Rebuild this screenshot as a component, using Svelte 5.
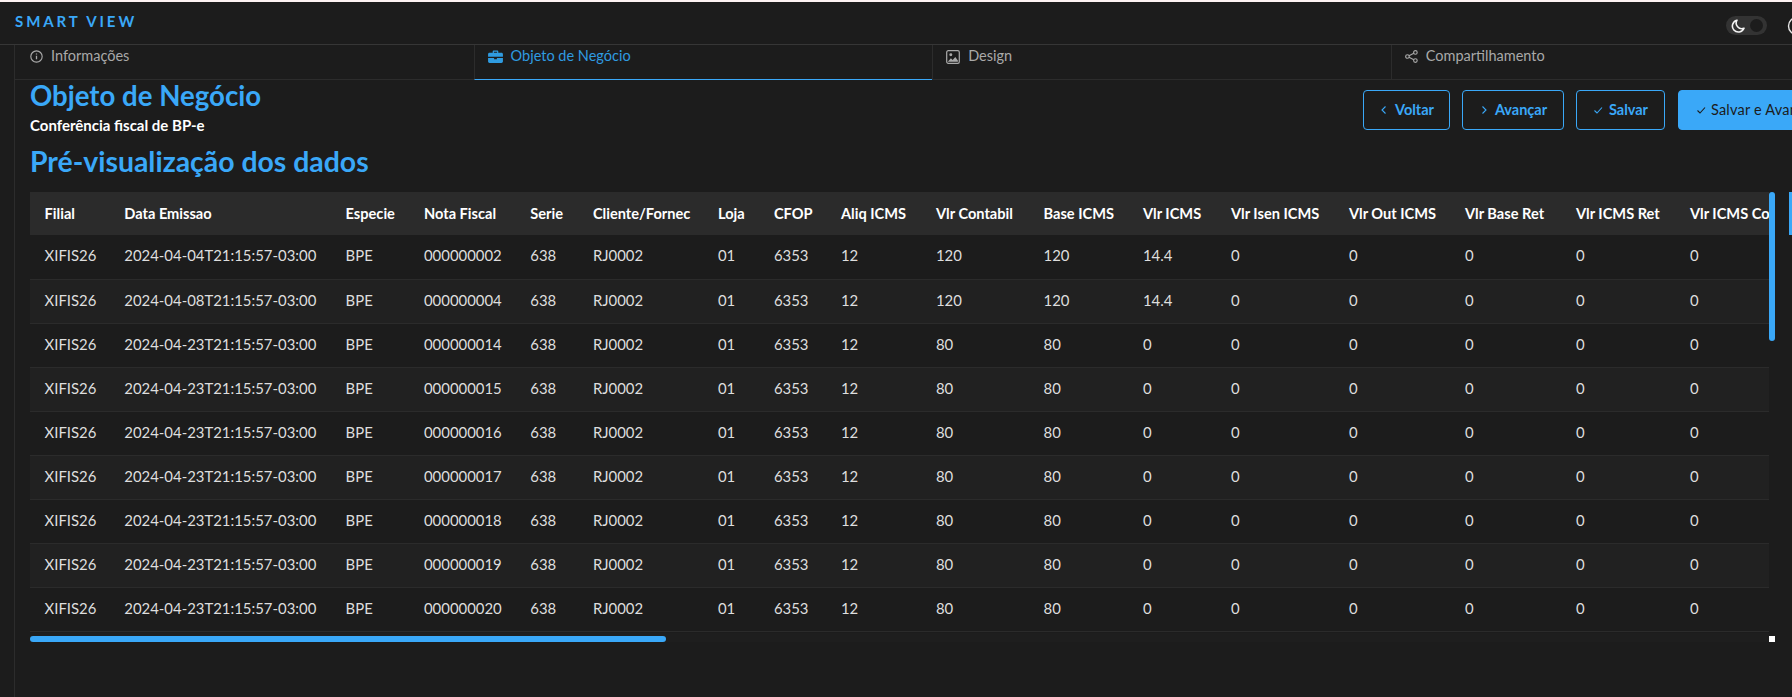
<script>
  const columns = [
    ['Filial', 79.7], ['Data Emissao', 221.3], ['Especie', 78.4], ['Nota Fiscal', 106.3], ['Serie', 62.7],
    ['Cliente/Fornec', 125], ['Loja', 56], ['CFOP', 67], ['Aliq ICMS', 95], ['Vlr Contabil', 107.6],
    ['Base ICMS', 99.4], ['Vlr ICMS', 88], ['Vlr Isen ICMS', 118], ['Vlr Out ICMS', 116], ['Vlr Base Ret', 111],
    ['Vlr ICMS Ret', 114], ['Vlr ICMS Comp', 140]
  ];
  const tableWidth = columns.reduce((s, c) => s + c[1], 0);
  const rowsInput = [
    ['04-04', '02', 120, 120, 14.4], ['04-08', '04', 120, 120, 14.4], ['04-23', '14', 80, 80, 0],
    ['04-23', '15', 80, 80, 0], ['04-23', '16', 80, 80, 0], ['04-23', '17', 80, 80, 0],
    ['04-23', '18', 80, 80, 0], ['04-23', '19', 80, 80, 0], ['04-23', '20', 80, 80, 0]
  ];
  const rows = rowsInput.map(([d, n, c, b, i]) => [
    'XIFIS26', `2024-${d}T21:15:57-03:00`, 'BPE', `0000000${n}`, '638', 'RJ0002', '01', '6353', '12',
    c, b, i, 0, 0, 0, 0, 0
  ]);
</script>

<div class="page">
  <header class="topbar">
    <div class="brand">SMART VIEW</div>
    <div class="tools">
      <div class="toggle">
        <svg class="moon" viewBox="0 0 14 14" width="14" height="14"><path d="M6 1.2a6 6 0 1 0 7 8 5.6 5.6 0 0 1-7-8z" fill="none" stroke="#f4f4f4" stroke-width="1.6" stroke-linejoin="round"/></svg>
        <span class="knob"></span>
      </div>
      <svg class="user" viewBox="0 0 20 20" width="20" height="20"><circle cx="10" cy="10" r="8.5" fill="none" stroke="#e6e6e6" stroke-width="1.4"/></svg>
    </div>
  </header>

  <main class="main">
    <nav class="tabs">
      <div class="tab">
        <svg viewBox="0 0 16 16" width="13" height="13"><circle cx="8" cy="8" r="7" fill="none" stroke="currentColor" stroke-width="1.4"/><path d="M8 7v4.4M8 4.2v1.3" stroke="currentColor" stroke-width="1.6" fill="none"/></svg>
        <span>Informações</span>
      </div>
      <div class="tab active">
        <svg viewBox="0 0 16 14" width="15" height="13"><path d="M5 3V1.6C5 .9 5.5.5 6.100.5h3.800C10.500.5 11 .9 11 1.600V3h3.400c.9 0 1.600.6 1.600 1.500V7.400H0V4.500C0 3.600.7 3 1.600 3zM6.300 3h3.400V1.800H6.300zM0 8.500h6.500V10h3V8.500H16v4c0 .9-.7 1.500-1.600 1.500H1.600C.7 14 0 13.400 0 12.500z" fill="currentColor"/></svg>
        <span>Objeto de Negócio</span>
      </div>
      <div class="tab">
        <svg viewBox="0 0 16 16" width="14" height="14"><rect x=".8" y=".8" width="14.400" height="14.400" rx="1.800" fill="none" stroke="currentColor" stroke-width="1.400"/><circle cx="5.500" cy="5.500" r="1.700" fill="currentColor"/><path d="M2 13.500l3.600-4 2 2 3-3.500 3 4v1.500z" fill="currentColor"/></svg>
        <span>Design</span>
      </div>
      <div class="tab">
        <svg viewBox="0 0 16 16" width="13" height="13"><g fill="none" stroke="currentColor" stroke-width="1.400"><circle cx="3" cy="8" r="2.200"/><circle cx="12.800" cy="3" r="2.200"/><circle cx="12.800" cy="13" r="2.200"/><path d="M5 7l5.800-3M5 9l5.800 3"/></g></svg>
        <span>Compartilhamento</span>
      </div>
    </nav>

    <section class="content">
      <div class="intro">
        <div class="titles">
          <h1>Objeto de Negócio</h1>
          <p>Conferência fiscal de BP-e</p>
        </div>
        <div class="actions">
          <button class="btn">
            <svg viewBox="0 0 10 10" width="10" height="10"><path d="M6.500 1.500L3 5l3.500 3.500" /></svg>
            <span>Voltar</span>
          </button>
          <button class="btn wide">
            <svg viewBox="0 0 10 10" width="10" height="10"><path d="M3.500 1.500L7 5 3.500 8.500" /></svg>
            <span>Avançar</span>
          </button>
          <button class="btn">
            <svg viewBox="0 0 10 10" width="10" height="10"><path d="M1.500 5.500L4 8l5-5.500" /></svg>
            <span>Salvar</span>
          </button>
          <button class="btn solid">
            <svg viewBox="0 0 10 10" width="10" height="10"><path d="M1.500 5.500L4 8l5-5.500" /></svg>
            <span>Salvar e Avançar</span>
          </button>
        </div>
      </div>

      <h2>Pré-visualização dos dados</h2>

      <div class="grid">
        <div class="viewport">
          <table style:width="{tableWidth}px">
            <colgroup>
              {#each columns as c}<col style:width="{c[1]}px" />{/each}
            </colgroup>
            <thead>
              <tr>{#each columns as c}<th>{c[0]}</th>{/each}</tr>
            </thead>
            <tbody>
              {#each rows as row}
                <tr>{#each row as v}<td>{v}</td>{/each}</tr>
              {/each}
            </tbody>
          </table>
        </div>
        <div class="thumb-v"></div>
        <div class="track-h"><div class="thumb-h"></div></div>
        <div class="corner"></div>
      </div>
    </section>
  </main>
  <div class="edge"></div>
</div>

<style>
  :global(html), :global(body) {
    margin: 0;
    background: #1c1c1c;
    overflow: hidden;
  }
  .page {
    position: relative;
    width: 1849px;
    height: 697px;
    overflow: hidden;
    background: #1c1c1c;
    color: #dcdcdc;
    font-family: Lato, "Noto Sans", sans-serif;
    font-size: 15px;
    box-sizing: border-box;
    border-top: 2px solid #fdf2f2;
  }
  .topbar {
    height: 42px;
    border-bottom: 1px solid #363636;
    display: flex;
    align-items: center;
    justify-content: space-between;
    padding-left: 15px;
    box-sizing: content-box;
  }
  .brand {
    color: #3aa8f8;
    font-weight: 700;
    font-size: 15px;
    letter-spacing: 2.900px;
    margin-top: -4px;
  }
  .tools {
    display: flex;
    align-items: center;
    gap: 20px;
    padding-right: 42px;
  }
  .toggle {
    width: 41px;
    height: 19px;
    background: #333;
    border-radius: 10px;
    position: relative;
    margin-top: 5px;
    display: flex;
    align-items: center;
    justify-content: space-between;
    padding: 0 4px 0 5px;
    box-sizing: border-box;
  }
  .knob {
    width: 13px;
    height: 13px;
    border-radius: 50%;
    background: #1c1c1c;
  }
  .user { margin-top: 5px; }
  .main {
    margin-left: 14px;
    border-left: 1px solid #2c2c2c;
    height: 652px;
  }
  .tabs {
    display: grid;
    grid-template-columns: repeat(4, 458.6px);
    height: 35px;
  }
  .tab {
    display: flex;
    align-items: flex-start;
    gap: 8px;
    padding: 2px 15px 0 13px;
    box-sizing: border-box;
    height: 35px;
    color: #a9a9a9;
    border-bottom: 1px solid #2c2c2c;
    border-left: 1px solid #2c2c2c;
    line-height: 18px;
    font-size: 14.500px;
  }
  .tab:first-child {
    border-left: 0;
    padding-left: 15px;
  }
  .tab svg { margin-top: 3px; flex: none; }
  .tab.active {
    color: #2f9be0;
    border-bottom-color: #3aa8f8;
  }
  .content { padding: 0 0 0 15px; }
  .intro {
    display: flex;
    justify-content: space-between;
    align-items: flex-start;
    padding-top: 10px;
    height: 43px;
  }
  h1, h2 {
    margin: 0;
    color: #3aa8f8;
    font-weight: 700;
    line-height: 32px;
  }
  h1 { font-size: 27.600px; }
  h2 {
    font-size: 28.400px;
    margin-top: 12px;
  }
  .titles { margin-top: -10px; }
  .titles p {
    margin: 4px 0 0;
    color: #fff;
    font-size: 15px;
    font-weight: 700;
    line-height: 18px;
  }
  .actions { display: flex; gap: 12px; }
  .btn {
    height: 40px;
    display: flex;
    align-items: center;
    justify-content: center;
    gap: 6px;
    box-sizing: border-box;
    width: 87px;
    background: transparent;
    border: 1px solid #3aa8f8;
    border-radius: 4px;
    color: #3aa8f8;
    font: 700 14.500px Lato, "Noto Sans", sans-serif;
    padding: 0 0 1px;
  }
  .btn svg {
    fill: none;
    stroke: currentColor;
    stroke-width: 1.100;
  }
  .btn.wide { width: 102px; }
  .btn:nth-child(3) { width: 89px; }
  .btn.solid {
    width: 171px;
    margin-left: 1px;
    background: #3aa8f8;
    color: #1c1c1c;
    font-weight: 400;
    justify-content: flex-start;
    padding-left: 17px;
    gap: 5px;
    letter-spacing: 0.200px;
  }
  .grid {
    position: relative;
    margin-top: 15px;
    width: 1745px;
    height: 450px;
  }
  .viewport {
    width: 1739px;
    height: 441px;
    overflow: hidden;
  }
  table {
    border-collapse: collapse;
    table-layout: fixed;
  }
  th, td {
    text-align: left;
    padding: 0 0 0 14.600px;
    white-space: nowrap;
    overflow: hidden;
    box-sizing: border-box;
  }
  th {
    height: 43px;
    background: #2b2b2b;
    color: #fff;
    font-weight: 700;
    font-size: 14.600px;
  }
  td {
    height: 44.100px;
    padding-bottom: 3px;
    border-bottom: 1px solid #2b2b2b;
    color: #dedede;
    font-size: 14.900px;
  }
  tbody tr:nth-child(even) td { background: #212121; }
  .thumb-v {
    position: absolute;
    left: 1739px;
    top: 0;
    width: 6px;
    height: 149px;
    background: #3aa8f8;
    border-radius: 3px;
  }
  .track-h {
    position: absolute;
    left: 0;
    top: 441px;
    width: 1739px;
    height: 9px;
    background: #1e1e1e;
  }
  .thumb-h {
    position: absolute;
    left: 0;
    top: 3px;
    width: 636px;
    height: 6px;
    background: #3aa8f8;
    border-radius: 3px;
  }
  .corner {
    position: absolute;
    left: 1739px;
    top: 444px;
    width: 6px;
    height: 6px;
    background: #fff;
  }
  .edge {
    position: absolute;
    left: 1789px;
    top: 190px;
    width: 3px;
    height: 43px;
    background: #3aa8f8;
  }
</style>
